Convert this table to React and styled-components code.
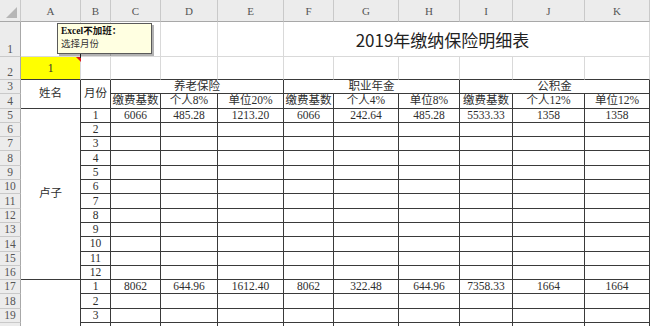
import React from "react";
import styled, { createGlobalStyle } from "styled-components";

const GRIDLINE = "#d9d9d9";
const LINE = "#3a3a3a";
const HEAD_BG = "#ececec";
const HEAD_LINE = "#c9c9c9";

const columns = ["A", "B", "C", "D", "E", "F", "G", "H", "I", "J", "K"];
const widths = [60, 30, 50, 57, 66, 50, 65, 61, 53, 72, 65];

const groups = [
  { label: "养老保险", col: 3, span: 3 },
  { label: "职业年金", col: 6, span: 3 },
  { label: "公积金", col: 9, span: 3 },
];
const subHeads = ["缴费基数", "个人8%", "单位20%", "缴费基数", "个人4%", "单位8%", "缴费基数", "个人12%", "单位12%"];

// first month row of each person
const filled = {
  5: ["6066", "485.28", "1213.20", "6066", "242.64", "485.28", "5533.33", "1358", "1358"],
  17: ["8062", "644.96", "1612.40", "8062", "322.48", "644.96", "7358.33", "1664", "1664"],
};

// row 20 only peeks in by a few pixels, so its labels stay hidden
const VISIBLE_ROWS = 19;

const GlobalStyle = createGlobalStyle`
  html, body {
    margin: 0;
    padding: 0;
    background: #fff;
    overflow: hidden;
  }
  * {
    box-sizing: border-box;
  }
`;

const Sheet = styled.div`
  position: relative;
  display: grid;
  grid-template-columns: 21px ${widths.map((w) => `${w}px`).join(" ")};
  grid-template-rows: 22px 35px 23px repeat(18, 14.3px);
  width: 650px;
  height: 326px;
  overflow: hidden;
  font-family: "Liberation Serif", "Noto Sans CJK SC", serif;
  font-size: 11.5px;
  color: #2e2e2e;
`;

const Corner = styled.div`
  grid-row: 1;
  grid-column: 1;
  position: relative;
  background: ${HEAD_BG};
  border-right: 1px solid ${HEAD_LINE};
  border-bottom: 1px solid #a8a8a8;

  &::after {
    content: "";
    position: absolute;
    right: 3px;
    bottom: 3px;
    border-left: 11px solid transparent;
    border-bottom: 11px solid #b6b6b6;
  }
`;

const ColHead = styled.div`
  grid-row: 1;
  grid-column: ${(p) => p.$col};
  display: flex;
  align-items: center;
  justify-content: center;
  background: ${HEAD_BG};
  border-right: 1px solid ${HEAD_LINE};
  border-bottom: 1px solid #a8a8a8;
  color: #555;
  font-size: 11px;
`;

const RowHead = styled.div`
  grid-row: ${(p) => p.$row};
  grid-column: 1;
  display: flex;
  align-items: flex-end;
  justify-content: center;
  background: ${HEAD_BG};
  border-right: 1px solid #a8a8a8;
  border-bottom: 1px solid ${HEAD_LINE};
  color: #555;
  font-size: 11.5px;
  line-height: 13px;
`;

const Cell = styled.div`
  grid-row: ${(p) => p.$row} / span ${(p) => p.$rs || 1};
  grid-column: ${(p) => p.$col} / span ${(p) => p.$cs || 1};
  display: flex;
  align-items: center;
  justify-content: center;
  white-space: nowrap;
  line-height: 13px;
  background: ${(p) => p.$bg || "#fff"};
  border-right: 1px solid ${(p) => (p.$dark ? LINE : GRIDLINE)};
  border-bottom: 1px solid ${(p) => (p.$dark || p.$under ? LINE : GRIDLINE)};
`;

const Title = styled(Cell)`
  padding-right: 48px;
  font-family: "Noto Sans CJK SC", "Liberation Sans", sans-serif;
  font-size: 17px;
  color: #222;
`;

const Comment = styled.div`
  position: absolute;
  left: 57px;
  top: 23px;
  width: 95px;
  height: 31px;
  padding: 1px 3px;
  background: #ffffe1;
  border: 1px solid #5a5a5a;
  box-shadow: 2px 2px 0 rgba(0, 0, 0, 0.3);
  font-size: 9.5px;
  line-height: 12.5px;
  color: #333;
`;

const CommentAuthor = styled.div`
  font-weight: bold;
  color: #111;
`;

const CommentMark = styled.div`
  position: absolute;
  left: 76px;
  top: 57px;
  border-top: 5px solid #e01b1b;
  border-left: 5px solid transparent;

  &::before {
    content: "";
    position: absolute;
    left: -1px;
    top: -8px;
    width: 1px;
    height: 4px;
    background: #222;
  }
`;

function MonthRows({ start, count, first }) {
  const rows = [];
  for (let i = 0; i < count; i++) {
    const row = start + i;
    const shown = row <= VISIBLE_ROWS;
    const values = i === 0 ? filled[start] : [];
    rows.push(
      <React.Fragment key={row}>
        <Cell $row={row + 1} $col={3} $dark>
          {shown ? first + i : ""}
        </Cell>
        {subHeads.map((_, j) => (
          <Cell key={j} $row={row + 1} $col={j + 4} $dark>
            {values[j] || ""}
          </Cell>
        ))}
      </React.Fragment>
    );
  }
  return rows;
}

export default function App() {
  return (
    <>
      <GlobalStyle />
      <Sheet>
        <Corner />
        {columns.map((c, i) => (
          <ColHead key={c} $col={i + 2}>
            {c}
          </ColHead>
        ))}
        {Array.from({ length: 20 }, (_, i) => (
          <RowHead key={i} $row={i + 2}>
            {i < VISIBLE_ROWS ? i + 1 : ""}
          </RowHead>
        ))}

        {/* row 1 */}
        {[2, 3, 4, 5, 6].map((c) => (
          <Cell key={c} $row={2} $col={c} />
        ))}
        <Title $row={2} $col={7} $cs={6}>
          2019年缴纳保险明细表
        </Title>

        {/* row 2 */}
        <Cell $row={3} $col={2} $bg="#ffff00" $under>
          1
        </Cell>
        {[3, 4, 5, 6, 7, 8, 9, 10, 11, 12].map((c) => (
          <Cell key={c} $row={3} $col={c} $under />
        ))}

        {/* header rows 3-4 */}
        <Cell $row={4} $col={2} $rs={2} $dark>
          姓名
        </Cell>
        <Cell $row={4} $col={3} $rs={2} $dark>
          月份
        </Cell>
        {groups.map((g) => (
          <Cell key={g.label} $row={4} $col={g.col + 1} $cs={g.span} $dark>
            {g.label}
          </Cell>
        ))}
        {subHeads.map((h, j) => (
          <Cell key={j} $row={5} $col={j + 4} $dark>
            {h}
          </Cell>
        ))}

        {/* people */}
        <Cell $row={6} $col={2} $rs={12} $dark>
          卢子
        </Cell>
        <MonthRows start={5} count={12} first={1} />
        <Cell $row={18} $col={2} $rs={4} $dark />
        <MonthRows start={17} count={4} first={1} />

        <Comment>
          <CommentAuthor>Excel不加班：</CommentAuthor>
          <div>选择月份</div>
        </Comment>
        <CommentMark />
      </Sheet>
    </>
  );
}
